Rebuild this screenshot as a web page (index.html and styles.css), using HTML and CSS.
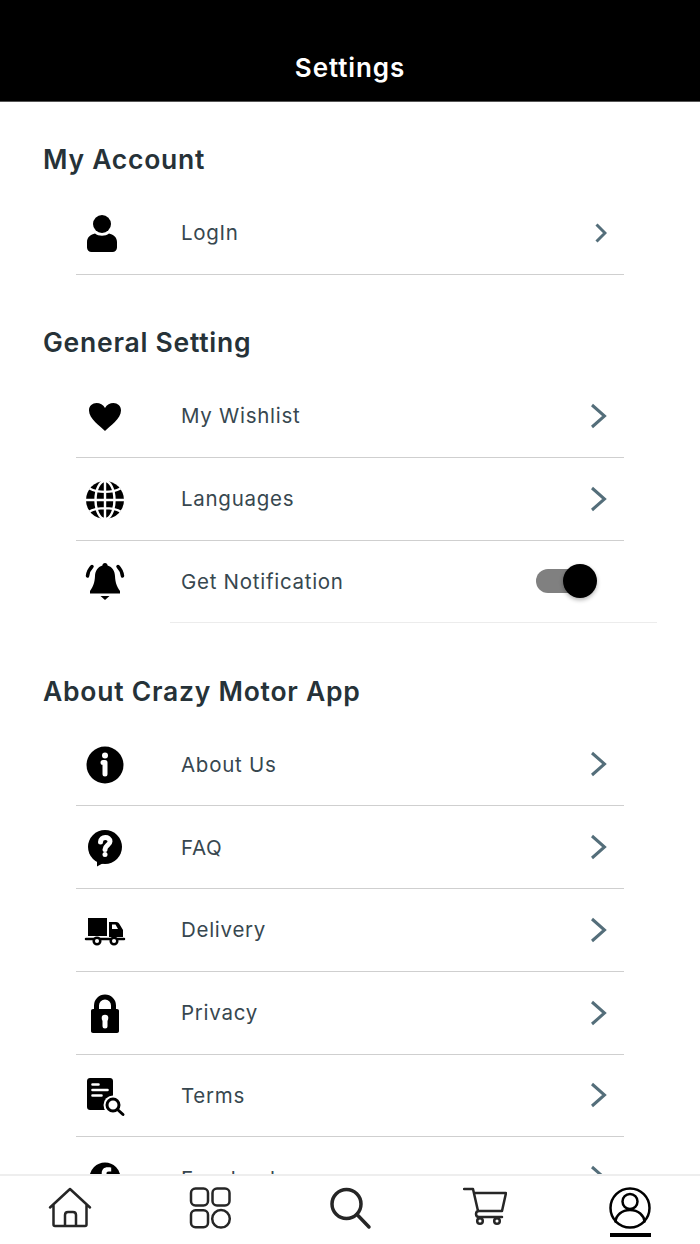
FILE: index.html
```html
<!DOCTYPE html>
<html lang="en">
<head>
<meta charset="utf-8">
<title>Settings</title>
<link rel="stylesheet" href="styles.css">
</head>
<body>
<div class="app">
  <header class="topbar"><h1 class="topbar-title">Settings</h1></header>
  <main class="content">
    <section class="group">
      <h2 class="group-title">My Account</h2>
      <a class="row">
        <svg class="row-icon" viewBox="0 0 40 40"><circle cx="17" cy="11" r="9"/><path d="M10 20.500c3.500 3 10.500 3 14 0 4 .8 8 3.500 8 8.500v5.500c0 2.500-2 4.500-4.500 4.500h-21C4 39 2 37 2 34.500V29c0-5 4-7.700 8-8.500z"/></svg>
        <span class="row-label">LogIn</span>
        <svg class="chevron chevron-small" viewBox="0 0 12 20"><path d="M1.500 1.500 10 10l-8.500 8.500"/></svg>
      </a>
    </section>
    <section class="group">
      <h2 class="group-title">General Setting</h2>
      <a class="row">
        <svg class="row-icon" viewBox="0 0 40 40"><path d="M20 35C15 30 4 22.500 4 14.500 4 9.800 7.600 7 11.500 7c3.500 0 6.700 1.800 8.500 5 1.800-3.200 5-5 8.500-5C32.400 7 36 9.800 36 14.500 36 22.500 25 30 20 35z"/></svg>
        <span class="row-label">My Wishlist</span>
        <svg class="chevron" viewBox="0 0 17 26"><path d="M2 2l12.500 11L2 24"/></svg>
      </a>
      <a class="row">
        <svg class="row-icon" viewBox="0 0 40 40"><circle cx="20" cy="21" r="19"/><g class="cut grid"><ellipse cx="20" cy="21" rx="9.500" ry="19"/><path d="M20 1v40M1 21h38M4.500 9.500C13 14 27 14 35.500 9.500M4.500 32.500C13 28 27 28 35.500 32.500"/></g></svg>
        <span class="row-label">Languages</span>
        <svg class="chevron" viewBox="0 0 17 26"><path d="M2 2l12.500 11L2 24"/></svg>
      </a>
      <div class="row row-toggle">
        <svg class="row-icon" viewBox="0 0 40 40"><path d="M20 2c1.600 0 2.500 1 2.600 2.500C27.500 6 29.800 10 30 15c.3 6 1.500 10.500 5 15v2.500H5V30c3.500-4.500 4.700-9 5-15 .2-5 2.500-9 7.400-10.500C17.500 3 18.400 2 20 2z"/><path d="M15.500 35h9L20 39z"/><path class="arc" d="M7 5.500C4.500 8 3 11 2.500 15M33 5.500c2.500 2.500 4 5.500 4.500 9.500"/></svg>
        <span class="row-label">Get Notification</span>
        <span class="switch"><span class="switch-knob"></span></span>
      </div>
    </section>
    <section class="group">
      <h2 class="group-title">About Crazy Motor App</h2>
      <a class="row">
        <svg class="row-icon" viewBox="0 0 40 40"><circle cx="20" cy="21" r="18.500"/><circle class="hole" cx="20" cy="11.500" r="3"/><path class="cut thick" d="M18 18.500h2v11.500"/></svg>
        <span class="row-label">About Us</span>
        <svg class="chevron" viewBox="0 0 17 26"><path d="M2 2l12.500 11L2 24"/></svg>
      </a>
      <a class="row">
        <svg class="row-icon" viewBox="0 0 40 40"><circle cx="20" cy="20" r="17"/><path d="M12 31v8.500l9-5z"/><path class="cut thick" d="M15.500 15c0-6 9.500-6 9.500-.5 0 3.500-5 4-5 8"/><circle class="hole" cx="20" cy="27.500" r="2.500"/></svg>
        <span class="row-label">FAQ</span>
        <svg class="chevron" viewBox="0 0 17 26"><path d="M2 2l12.500 11L2 24"/></svg>
      </a>
      <a class="row">
        <svg class="row-icon" viewBox="0 0 40 40"><path d="M3 8h19v18H3zM24 12h7c2 0 3 1 4 3l3 5v7H24z"/><path class="hole" d="M27 14.500h3.500l2.500 4.500h-6z"/><path class="ink-line" d="M1 29h38"/><circle class="wheel" cx="12" cy="31" r="3.300"/><circle class="wheel" cx="29" cy="31" r="3.300"/></svg>
        <span class="row-label">Delivery</span>
        <svg class="chevron" viewBox="0 0 17 26"><path d="M2 2l12.500 11L2 24"/></svg>
      </a>
      <a class="row">
        <svg class="row-icon" viewBox="0 0 40 40"><path class="ink-line heavy" d="M11.500 18v-5.500a8.500 8.500 0 0 1 17 0V18"/><path d="M8 16h24c1.200 0 2 .8 2 2v20c0 1.200-.8 2-2 2H8c-1.200 0-2-.8-2-2V18c0-1.200.8-2 2-2z"/><circle class="hole" cx="20" cy="25" r="3.300"/><path class="cut thick" d="M20 26v7"/></svg>
        <span class="row-label">Privacy</span>
        <svg class="chevron" viewBox="0 0 17 26"><path d="M2 2l12.500 11L2 24"/></svg>
      </a>
      <a class="row">
        <svg class="row-icon" viewBox="0 0 40 40"><path d="M5 3h20c1.700 0 3 1.300 3 3v29H5c-1.700 0-3-1.300-3-3V6c0-1.700 1.300-3 3-3z"/><path class="cut thin" d="M7.500 9.500h6M7.500 15h15M7.500 20.500h9"/><circle class="hole" cx="28" cy="30" r="9.500"/><circle class="lens" cx="28" cy="30" r="6"/><path class="ink-line thick-line" d="M32.500 34.500 38 39.500"/></svg>
        <span class="row-label">Terms</span>
        <svg class="chevron" viewBox="0 0 17 26"><path d="M2 2l12.500 11L2 24"/></svg>
      </a>
      <a class="row">
        <svg class="row-icon" viewBox="0 0 40 40"><circle cx="20" cy="20" r="15.500"/><path class="hole" d="M21.500 35v-12h4l.6-4.500h-4.600v-2.800c0-1.300.4-2.200 2.200-2.200h2.500v-4c-.5 0-2-.2-3.600-.2-3.500 0-5.900 2.100-5.900 6v3.200h-4V23h4v12z"/></svg>
        <span class="row-label">Facebook</span>
        <svg class="chevron" viewBox="0 0 17 26"><path d="M2 2l12.500 11L2 24"/></svg>
      </a>
    </section>
  </main>
  <nav class="tabbar">
    <a class="tab">
      <svg class="tab-icon" viewBox="0 0 44 44"><path d="M2 21.500 22 3l20 18.500M5.500 18v20.500c0 1 .6 1.500 1.500 1.500h30c.9 0 1.500-.5 1.500-1.500V18M17 40V29c0-2 1.200-3 3-3h5c1.800 0 3 1 3 3v11"/></svg>
    </a>
    <a class="tab">
      <svg class="tab-icon" viewBox="0 0 44 44"><rect x="3" y="2.500" width="17" height="17" rx="4.500"/><rect x="24.500" y="2.500" width="17" height="17" rx="4.500"/><rect x="3" y="24.300" width="17" height="17" rx="4.500"/><circle cx="33" cy="32.800" r="8.800"/></svg>
    </a>
    <a class="tab">
      <svg class="tab-icon tab-icon-bold" viewBox="0 0 44 44"><circle cx="18.500" cy="18" r="14.500"/><path d="M29 28.500 41 41"/></svg>
    </a>
    <a class="tab tab-cart">
      <svg class="tab-icon" viewBox="0 0 44 44"><path d="M1 3h9l5 22M11 7h32l-4 18H16c-4 0-4 6 0 6h23"/><circle cx="17" cy="35" r="2.800"/><circle cx="34" cy="35" r="2.800"/></svg>
    </a>
    <a class="tab tab-active">
      <svg class="tab-icon" viewBox="0 0 44 44"><circle cx="22" cy="22" r="19.500"/><circle cx="22" cy="15.500" r="7.500"/><path d="M7.500 35.500c.5-6 6-11.500 14.500-11.500s14 5.500 14.500 11.500"/></svg>
      <span class="tab-marker"></span>
    </a>
  </nav>
</div>
</body>
</html>
```
FILE: styles.css
```css
* { box-sizing: border-box; }

html, body {
  margin: 0;
  height: 100%;
  background: #fff;
}

.app {
  display: flex;
  flex-direction: column;
  height: 1244px;
  overflow: hidden;
  font-family: Inter, "Liberation Sans", sans-serif;
}

.topbar {
  flex: none;
  height: 102px;
  background: #000;
  border-bottom: 1px solid #555;
  display: flex;
  align-items: center;
  justify-content: center;
  padding-top: 34px;
}

.topbar-title {
  margin: 0;
  color: #fff;
  font-size: 26px;
  font-weight: 600;
  letter-spacing: 0.9px;
}

.content {
  flex: 1;
  min-height: 0;
  overflow: hidden;
  padding-top: 28px;
}

.group { margin-bottom: 38.250px; }

.group-title {
  margin: 0 0 2px 43px;
  height: 60px;
  line-height: 58.500px;
  font-size: 26.500px;
  font-weight: 600;
  letter-spacing: 0.75px;
  color: #263238;
}

.row {
  display: flex;
  align-items: center;
  height: 82.750px;
  margin: 0 76px;
  border-bottom: 1px solid #cfcfcf;
  color: #37474f;
}

.row-icon {
  flex: none;
  width: 40px;
  height: 40px;
  margin-left: 9px;
  margin-right: 56px;
  fill: #000;
  overflow: visible;
}

.row-label {
  flex: 1;
  font-size: 20.500px;
  letter-spacing: 0.72px;
}

.chevron {
  flex: none;
  width: 17px;
  height: 26px;
  margin-right: 17px;
  fill: none;
  stroke: #546e7a;
  stroke-width: 3;
}

.chevron-small {
  width: 12px;
  height: 20px;
  margin-right: 17px;
}

/* the last row of the settings group sits on a lighter, wider rule */
.row-toggle {
  position: relative;
  border-bottom-color: transparent;
}

.row-toggle::after {
  content: "";
  position: absolute;
  left: 94px;
  right: -33px;
  bottom: -1px;
  height: 1px;
  background: #ececec;
}

.switch {
  flex: none;
  position: relative;
  width: 54px;
  height: 24px;
  margin-right: 34px;
  border-radius: 12px;
  background: #808080;
}

.switch-knob {
  position: absolute;
  top: -5px;
  right: -7px;
  width: 34px;
  height: 34px;
  border-radius: 50%;
  background: #000;
  box-shadow: 0 2px 4px rgba(0, 0, 0, 0.3);
}

.cut {
  fill: none;
  stroke: #fff;
  stroke-width: 2;
}

.cut.grid { stroke-width: 2.400; }
.cut.thick { stroke-width: 5; stroke-linecap: round; stroke-linejoin: round; }
.cut.thin { stroke-width: 2.600; stroke-linecap: round; }
.hole { fill: #fff; }

.arc {
  fill: none;
  stroke: #000;
  stroke-width: 3.500;
  stroke-linecap: round;
}

.ink-line {
  fill: none;
  stroke: #000;
  stroke-width: 2.500;
  stroke-linecap: round;
}

.ink-line.heavy { stroke-width: 5; }
.ink-line.thick-line { stroke-width: 3; }

.wheel {
  fill: #fff;
  stroke: #000;
  stroke-width: 2.500;
}

.lens {
  fill: #fff;
  stroke: #000;
  stroke-width: 3;
}

.tabbar {
  flex: none;
  display: flex;
  height: 70px;
  background: #fff;
  border-top: 2px solid #eee;
}

.tab {
  flex: 1;
  display: flex;
  flex-direction: column;
  align-items: center;
  padding-top: 10px;
}

.tab-icon {
  width: 44px;
  height: 44px;
  fill: none;
  stroke: #262626;
  stroke-width: 2.500;
  stroke-linecap: round;
  stroke-linejoin: round;
}

.tab-icon-bold { stroke-width: 3.500; }

.tab-cart .tab-icon { margin-right: 10px; }

.tab-active .tab-icon { stroke: #000; }

.tab-marker {
  width: 41px;
  height: 4px;
  margin-top: 3px;
  background: #000;
}
```
